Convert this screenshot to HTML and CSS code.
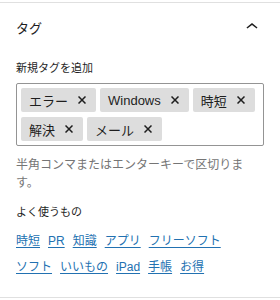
FILE: index.html
```html
<!DOCTYPE html>
<html lang="ja">
<head>
<meta charset="utf-8">
<link rel="stylesheet" href="styles.css">
</head>
<body>
<div class="panel">
  <div class="panel-header">
    <span class="panel-title">タグ</span>
    <svg class="chevron" width="24" height="24" viewBox="0 0 24 24"><path d="M6.5 12.4L12 8l5.5 4.4-.9 1.2L12 10l-4.6 3.6-1-1.2z" fill="#1e1e1e"/></svg>
  </div>
  <div class="panel-body">
    <div class="field-label">新規タグを追加</div>
    <div class="token-box">
      <span class="token"><span>エラー</span><svg class="x" width="8" height="8" viewBox="0 0 8 8"><path d="M0.5 0.5L7.5 7.5M7.5 0.5L0.5 7.5" stroke="#1e1e1e" stroke-width="1.5"/></svg></span>
      <span class="token"><span>Windows</span><svg class="x" width="8" height="8" viewBox="0 0 8 8"><path d="M0.5 0.5L7.5 7.5M7.5 0.5L0.5 7.5" stroke="#1e1e1e" stroke-width="1.5"/></svg></span>
      <span class="token"><span>時短</span><svg class="x" width="8" height="8" viewBox="0 0 8 8"><path d="M0.5 0.5L7.5 7.5M7.5 0.5L0.5 7.5" stroke="#1e1e1e" stroke-width="1.5"/></svg></span>
      <span class="token"><span>解決</span><svg class="x" width="8" height="8" viewBox="0 0 8 8"><path d="M0.5 0.5L7.5 7.5M7.5 0.5L0.5 7.5" stroke="#1e1e1e" stroke-width="1.5"/></svg></span>
      <span class="token"><span>メール</span><svg class="x" width="8" height="8" viewBox="0 0 8 8"><path d="M0.5 0.5L7.5 7.5M7.5 0.5L0.5 7.5" stroke="#1e1e1e" stroke-width="1.5"/></svg></span>
    </div>
    <p class="help">半角コンマまたはエンターキーで区切ります。</p>
    <div class="most-used-label">よく使うもの</div>
    <ul class="most-used">
      <li><a href="#">時短</a></li>
      <li><a href="#">PR</a></li>
      <li><a href="#">知識</a></li>
      <li><a href="#">アプリ</a></li>
      <li><a href="#">フリーソフト</a></li>
      <li><a href="#">ソフト</a></li>
      <li><a href="#">いいもの</a></li>
      <li><a href="#">iPad</a></li>
      <li><a href="#">手帳</a></li>
      <li><a href="#">お得</a></li>
    </ul>
  </div>
</div>
</body>
</html>
```
FILE: styles.css
```css
html, body {
  margin: 0;
  padding: 0;
  background: #fff;
}
body {
  font-family: "Liberation Sans", "Noto Sans CJK JP", sans-serif;
  color: #1e1e1e;
}
.panel {
  margin-top: 2px;
  border-top: 1px solid #e0e0e0;
  border-bottom: 1px solid #e0e0e0;
}
.panel-header {
  height: 48px;
  padding: 0 16px;
  display: flex;
  align-items: center;
  justify-content: space-between;
}
.panel-title {
  font-size: 13px;
  font-weight: 400;
}
.chevron {
  display: block;
}
.panel-body {
  padding: 9px 16px 17px;
}
.field-label {
  font-size: 11px;
  line-height: 16px;
  font-weight: 400;
  margin-bottom: 7px;
}
.token-box {
  border: 1px solid #949494;
  border-radius: 2px;
  padding: 4px;
  display: flex;
  flex-wrap: wrap;
  gap: 5px 4px;
}
.token {
  display: inline-flex;
  align-items: center;
  gap: 10px;
  height: 24px;
  padding: 0 10px 0 8px;
  background: #ddd;
  border-radius: 2px;
  font-size: 13px;
  color: #1e1e1e;
}
.x {
  display: block;
}
.help {
  margin: 10px 0 0;
  font-size: 12px;
  line-height: 18px;
  color: #757575;
}
.most-used-label {
  margin-top: 12px;
  font-size: 11px;
  line-height: 16px;
  font-weight: 400;
}
.most-used {
  list-style: none;
  margin: 8px 0 0;
  padding: 0;
  display: flex;
  flex-wrap: wrap;
  column-gap: 8px;
}
.most-used li {
  line-height: 26px;
  font-size: 12px;
}
.most-used a {
  color: #2271b1;
  text-decoration: underline;
  text-underline-offset: 2px;
}
```
